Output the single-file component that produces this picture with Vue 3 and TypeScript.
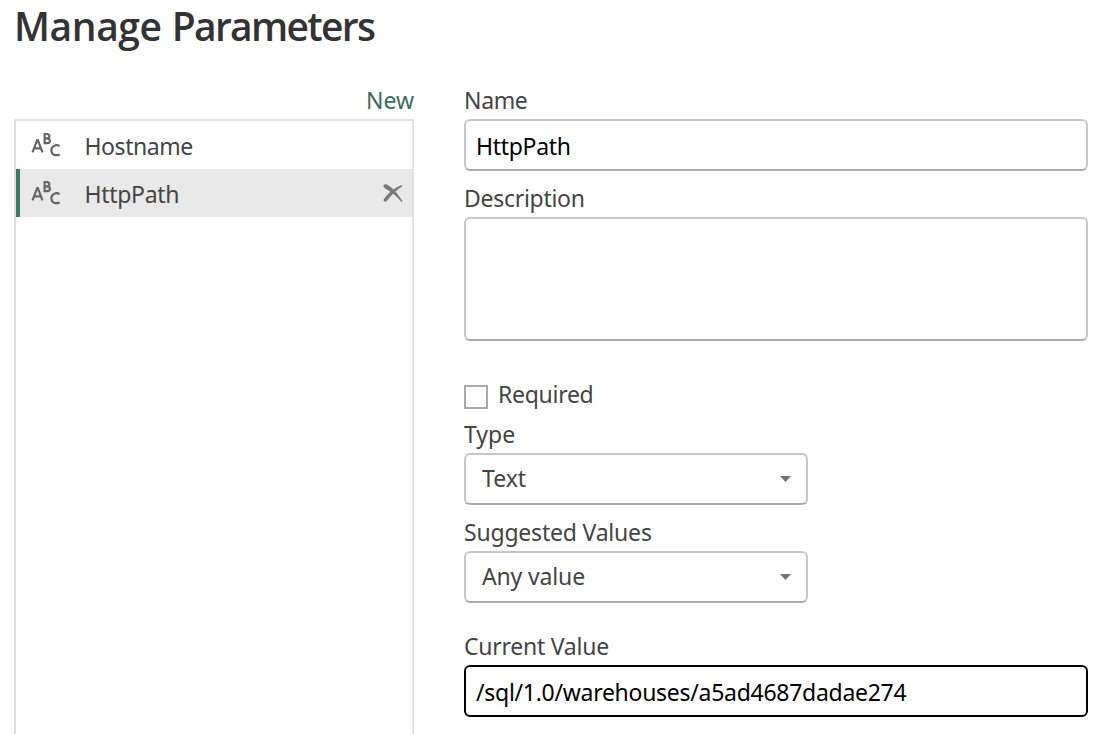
<script setup lang="ts">
import { ref } from 'vue'

interface Parameter {
  name: string
  cls: string
}

const parameters: Parameter[] = [
  { name: 'Hostname', cls: 't-hostname' },
  { name: 'HttpPath', cls: 't-httppath' },
]
const selected = ref(1)
const name = ref('HttpPath')
const description = ref('')
const currentValue = ref('/sql/1.0/warehouses/a5ad4687dadae274')
</script>

<template>
  <main class="dialog">
    <h1 class="title"><span class="w-manage">Manage</span> <span class="w-parameters">Parameters</span></h1>
    <div class="columns">
      <aside class="sidebar">
        <div class="toolbar"><a class="new">New</a></div>
        <ul class="list">
          <li
            v-for="(p, i) in parameters"
            :key="p.name"
            class="row"
            :class="{ active: i === selected }"
            @click="selected = i"
          >
            <svg class="abc" width="32" height="28" viewBox="0 0 32 28">
              <g fill="none" stroke="#666" stroke-width="2.2">
                <path d="M2.5 21.4 L7.2 9.2 H7.8 L12.5 21.4 M4.2 17.4 H10.8" />
                <path d="M14.6 3 V12.2 H16.8 C21 12.2 21 7.3 16.9 7.3 H14.6 H16.6 C20.3 7.3 20.2 3 16.8 3 H13.7" />
                <path d="M29.6 15 C25.6 13 21.4 15.2 21.4 19.4 C21.4 23.8 25.8 25.2 29.6 23.4" />
              </g>
            </svg>
            <span class="row-name" :class="p.cls">{{ p.name }}</span>
            <svg v-if="i === selected" class="remove" width="20" height="20" viewBox="0 0 20 20">
              <path d="M.4 3 C.8 .9 3 .8 4.6 1.7 C10.5 5.5 15.8 11.5 19.5 18.2 L18.5 19 C13.5 13 8 8.6 1.8 5.3 Q.6 4.6 .4 3 Z" fill="#7a7a7a" />
              <path d="M18.8 1.9 L19.6 2.9 C13.5 7 8.2 11.8 4.3 17.6 C3.1 19.4 .4 18.9 .5 16.8 C4.8 10 11.2 4.7 18.8 1.9 Z" fill="#7a7a7a" />
            </svg>
          </li>
        </ul>
      </aside>

      <section class="form">
        <label class="label t-name">Name</label>
        <input v-model="name" class="box input t-httppath" spellcheck="false" />
        <label class="label spaced t-description">Description</label>
        <textarea v-model="description" class="box area"></textarea>
        <div class="check">
          <span class="tick"></span>
          <span class="t-required">Required</span>
        </div>
        <label class="label type-label">Type</label>
        <div class="box select">
          <span>Text</span>
          <svg width="11" height="6" viewBox="0 0 11 6"><path d="M0 0 H11 L5.5 6 Z" fill="#737373" /></svg>
        </div>
        <label class="label spaced t-suggested">Suggested Values</label>
        <div class="box select">
          <span class="t-any">Any value</span>
          <svg width="11" height="6" viewBox="0 0 11 6"><path d="M0 0 H11 L5.5 6 Z" fill="#737373" /></svg>
        </div>
        <label class="label current-label t-current">Current Value</label>
        <input v-model="currentValue" class="box input focused t-path" spellcheck="false" />
      </section>
    </div>
  </main>
</template>

<style>
body {
  overflow: hidden;
  background: #fff;
}
</style>

<style scoped>
.dialog {
  box-sizing: border-box;
  width: 1104px;
  height: 734px;
  padding: 0 16px 0 14px;
  overflow: hidden;
  font-family: 'Noto Sans', 'Open Sans', sans-serif;
  font-size: 23px;
  color: #444;
  background: #fff;
}
.title {
  margin: 0;
  height: 87px;
  line-height: 51px;
  font-family: 'Open Sans', 'Noto Sans', sans-serif;
  font-size: 39px;
  font-weight: 600;
  color: #333;
  white-space: nowrap;
}
.w-manage {
  letter-spacing: -0.4px;
}
.w-parameters {
  letter-spacing: -1.7px;
}
.columns {
  display: flex;
  gap: 50px;
}
.sidebar {
  width: 400px;
}
.toolbar {
  height: 32px;
  line-height: 26px;
  text-align: right;
}
.new {
  color: #3b6b5e;
}
.list {
  box-sizing: border-box;
  height: 640px;
  margin: 0;
  padding: 0;
  border: 2px solid #e1e1e1;
  list-style: none;
}
.row {
  box-sizing: border-box;
  display: flex;
  align-items: center;
  height: 48px;
  padding: 0 9px 0 10px;
  border-left: 4px solid transparent;
}
.row.active {
  background: #e9e9e9;
  border-left-color: #3f7a68;
}
.abc {
  flex: none;
  margin-right: 22.5px;
}
.row-name {
  flex: 1;
  line-height: 48px;
  padding-top: 2px;
}
.form {
  display: flex;
  flex-direction: column;
  width: 624px;
}
.label {
  height: 32px;
  line-height: 26px;
  white-space: nowrap;
}
.spaced {
  margin-top: 14px;
}
.box {
  box-sizing: border-box;
  border: 2px solid #c6c6c6;
  border-bottom-color: #aaa;
  border-radius: 6px;
  background: #fff;
  outline: none;
}
.input {
  width: 624px;
  height: 52px;
  padding: 2px 10px 0;
  font-family: inherit;
  font-size: 23px;
  color: #000;
}
.area {
  width: 624px;
  height: 124px;
  resize: none;
}
.box.focused {
  border-color: #000;
}
.check {
  display: flex;
  gap: 10px;
  height: 24px;
  margin-top: 44px;
  line-height: 18px;
}
.tick {
  box-sizing: border-box;
  width: 24px;
  height: 24px;
  border: 2px solid #aaa;
}
.type-label {
  margin-top: 12px;
}
.select {
  display: flex;
  align-items: center;
  justify-content: space-between;
  width: 344px;
  height: 52px;
  padding: 0 15px 0 16px;
}
.select span {
  padding-bottom: 2px;
}
.current-label {
  margin-top: 30px;
}
.t-hostname {
  letter-spacing: -0.45px;
}
.t-httppath {
  letter-spacing: -0.3px;
}
.t-name {
  letter-spacing: -0.35px;
}
.t-description {
  letter-spacing: -0.28px;
}
.t-required {
  letter-spacing: -0.28px;
}
.t-suggested {
  letter-spacing: -0.2px;
}
.t-any {
  letter-spacing: -0.15px;
}
.t-current {
  letter-spacing: -0.25px;
}
.t-path {
  letter-spacing: -0.28px;
}
</style>
